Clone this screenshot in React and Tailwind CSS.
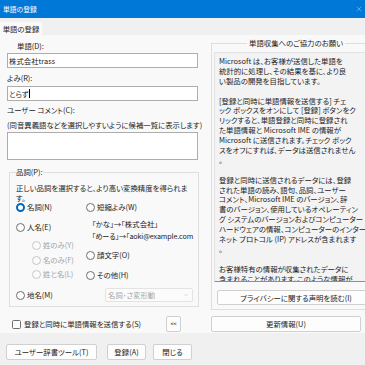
import React from "react";
import { X, ChevronDown } from "lucide-react";

const infoLines = [
  "Microsoft は、お客様が送信した単語を",
  "統計的に処理し、その結果を基に、より良",
  "い製品の開発を目指しています。",
  "",
  "[登録と同時に単語情報を送信する] チェ",
  "ック ボックスをオンにして [登録] ボタンをク",
  "リックすると、単語登録と同時に登録され",
  "た単語情報と Microsoft IME の情報が",
  "Microsoft に送信されます。チェック ボック",
  "スをオフにすれば、データは送信されません",
  "。",
  "",
  "登録と同時に送信されるデータには、登録",
  "された単語の読み、語句、品詞、ユーザー",
  "コメント、Microsoft IME のバージョン、辞",
  "書のバージョン、使用しているオペレーティン",
  "グ システムのバージョンおよびコンピューター",
  "ハードウェアの情報、コンピューターのインター",
  "ネット プロトコル (IP) アドレスが含まれます",
  "。",
  "",
  "お客様特有の情報が収集されたデータに",
  "含まれることがあります。このような情報が",
];

// RADIO BUTTON
const Radio = ({ checked, disabled }) => {
  if (checked)
    return <span className="w-[9px] h-[9px] rounded-full border-[2.5px] border-[#0067c0] bg-white shrink-0" />;
  return (
    <span
      className={`w-[9px] h-[9px] rounded-full border shrink-0 ${
        disabled ? "border-[#c6c6c6] bg-[#fbfbfb]" : "border-[#6f6f6f] bg-[#fbfbfb]"
      }`}
    />
  );
};

const Option = ({ label, checked, disabled, className = "" }) => (
  <div className={`flex items-center h-[10px] gap-[2px] ${className}`}>
    <Radio checked={checked} disabled={disabled} />
    <span className={disabled ? "text-[#a3a3a3]" : ""}>{label}</span>
  </div>
);

const Button = ({ children, className = "" }) => (
  <div
    className={`flex items-center justify-center bg-[#fdfdfd] border border-[#d0d0d0] rounded-[2px] ${className}`}
  >
    {children}
  </div>
);

const App = () => {
  return (
    <div className="w-[365px] h-[365px] overflow-hidden flex flex-col bg-[#f0f0f0] text-[#1b1b1b] text-[7.4px] leading-[10px] [font-family:'Noto_Sans_CJK_JP',sans-serif] [font-feature-settings:'palt']">
      {/* TITLE BAR */}
      <div className="h-[18px] bg-[#0078d7] flex items-center justify-between pl-[3px] pr-[2px] text-white text-[6.8px]">
        <span>単語の登録</span>
        <X size={8} strokeWidth={1.2} className="text-[#d4e7f8]" />
      </div>

      {/* TAB STRIP */}
      <div className="h-[17px] pt-[4px]">
        <div className="w-[42px] h-[13px] bg-[#f9f9f9] flex items-center justify-center">単語の登録</div>
      </div>

      {/* CONTENT */}
      <div className="h-[298px] bg-[#f9f9f9] flex pl-[7px] gap-[13px]">
        {/* LEFT COLUMN */}
        <div className="w-[191px] flex flex-col pt-[6px]">
          <div className="h-[10px] pl-[10px]">単語(D):</div>
          <div className="mt-[2px] h-[15px] bg-white border border-[#adadad] flex items-center pl-[1px]">
            株式会社trass
          </div>

          <div className="mt-[5px] h-[10px]">よみ(R):</div>
          <div className="mt-[3px] h-[15px] bg-white border border-[#adadad] flex items-center pl-[1px]">
            とらず<span className="w-px h-[9px] bg-black" />
          </div>

          <div className="mt-[4px] h-[10px]">ユーザー コメント(C):</div>
          <div className="mt-[5px] h-[10px] whitespace-nowrap">(同音異義語などを選択しやすいように候補一覧に表示します)</div>
          <div className="mt-[2px] h-[28px] bg-white border border-[#adadad]" />

          {/* PART OF SPEECH */}
          <fieldset className="mt-[7px] ml-[2px] w-[189px] border border-[#dedede] pl-[6px] pr-[4px] pt-[6px] pb-[4px]">
            <legend className="h-[10px] px-0">品詞(P):</legend>
            <div className="h-[9.5px] leading-[9.5px] whitespace-nowrap">正しい品詞を選択すると、より高い変換精度を得られま</div>
            <div className="h-[9.5px] leading-[9.5px]">す。</div>
            <div className="flex">
              <div className="w-[70px] flex flex-col">
                <Option label="名詞(N)" checked />
                <Option label="人名(E)" className="mt-[10px]" />
                <Option label="姓のみ(Y)" disabled className="mt-[8px] pl-[16px]" />
                <Option label="名のみ(F)" disabled className="mt-[5px] pl-[16px]" />
                <Option label="姓と名(L)" disabled className="mt-[4px] pl-[16px]" />
                <Option label="地名(M)" className="mt-[11px]" />
              </div>
              <div className="w-[108px] flex flex-col">
                <Option label="短縮よみ(W)" />
                <div className="mt-[7px] h-[10px] pl-[6px] whitespace-nowrap">「かな」→「株式会社」</div>
                <div className="mt-[2px] h-[10px] pl-[6px] whitespace-nowrap text-[7.1px] tracking-[-0.1px]">「めーる」→「aoki@example.com</div>
                <Option label="顔文字(O)" className="mt-[9px]" />
                <Option label="その他(H)" className="mt-[10px]" />
                <div className="mt-[8px] ml-[19px] w-[88px] h-[14px] bg-[#fbfbfb] border border-[#e3e3e3] rounded-[2px] flex items-center justify-between pl-[2px] pr-[3px] text-[#a6a6a6]">
                  <span>名詞･さ変形動</span>
                  <ChevronDown size={6} strokeWidth={1.5} />
                </div>
              </div>
            </div>
          </fieldset>

          <div className="mt-[9px] h-[16px] flex items-center">
            <span className="ml-[5px] w-[9px] h-[9px] rounded-[1.5px] border border-[#6f6f6f] bg-[#fbfbfb]" />
            <span className="ml-[3px]">登録と同時に単語情報を送信する(S)</span>
            <Button className="ml-auto mr-[17px] w-[15px] h-[16px] text-[5.5px]">&lt;&lt;</Button>
          </div>
        </div>

        {/* RIGHT COLUMN */}
        <div className="w-[150px] flex flex-col pt-[3px]">
          <fieldset className="border border-[#dedede] pl-[2px] pr-[2px] pb-[4px]">
            <legend className="mx-auto h-[10px] px-[2px]">単語収集へのご協力のお願い</legend>
            <div className="mt-[4px] h-[230px] flex bg-[#f3f3f3] border border-[#e2e2e2] border-b-[#8f8f8f]">
              <div className="flex-1 overflow-hidden pt-[3px] pl-[4px]">
                {infoLines.map((l, i) => (
                  <div key={i} className="h-[9.9px] leading-[9.9px] whitespace-nowrap">
                    {l || "\u00a0"}
                  </div>
                ))}
              </div>
              <div className="w-[11px] bg-[#ececec]">
                <div className="mt-[12px] ml-[3px] w-[3px] h-[132px] rounded-full bg-[#858585]" />
              </div>
            </div>
            <Button className="mt-[8px] mx-[3px] h-[15px]">プライバシーに関する声明を読む(I)</Button>
          </fieldset>
          <Button className="mt-[6px] h-[16px]">更新情報(U)</Button>
        </div>
      </div>

      {/* BOTTOM BUTTONS */}
      <div className="flex-1 flex pt-[11px] pl-[6px]">
        <Button className="w-[91px] h-[16px]">ユーザー辞書ツール(T)</Button>
        <Button className="ml-[10px] w-[39px] h-[16px]">登録(A)</Button>
        <Button className="ml-[7px] w-[39px] h-[16px]">閉じる</Button>
      </div>
    </div>
  );
};

export default App;
